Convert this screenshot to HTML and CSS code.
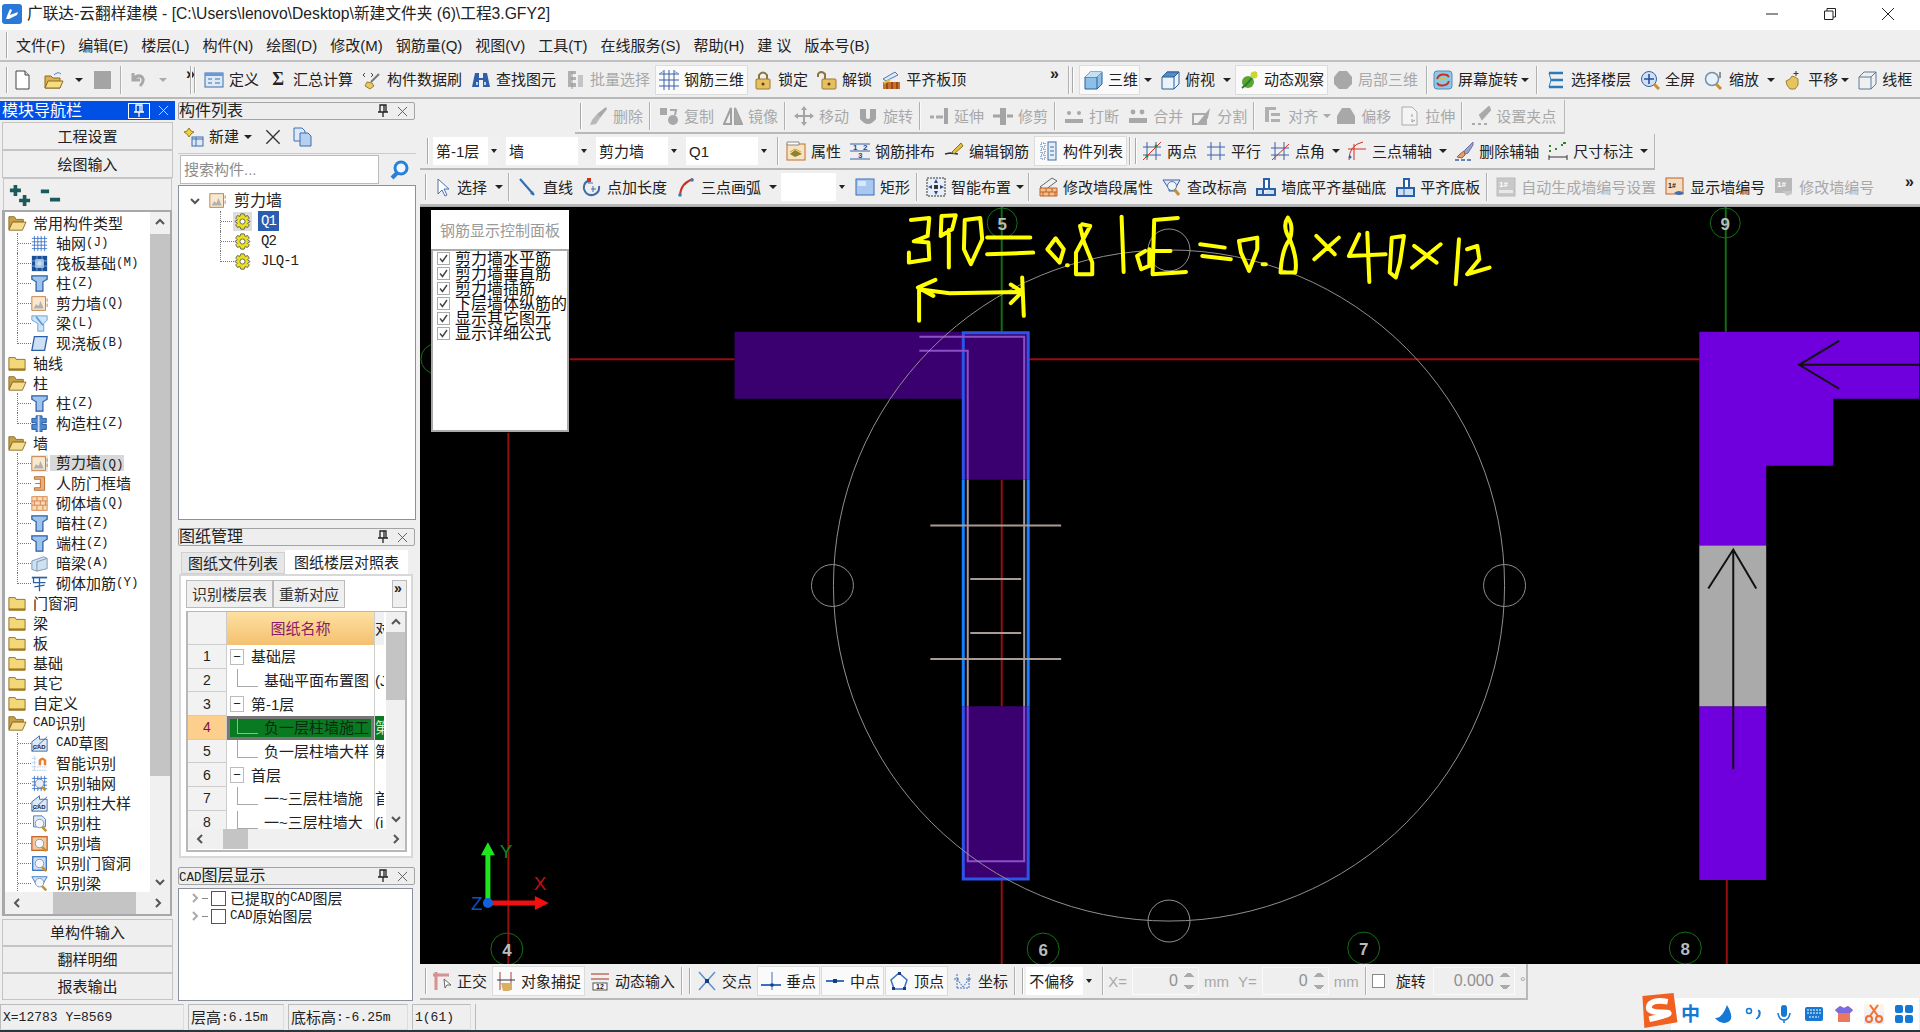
FILE: index.html
```html
<!doctype html>
<html lang="zh-CN">
<head>
<meta charset="utf-8">
<title>广联达-云翻样建模</title>
<link rel="stylesheet" href="styles.css">
</head>
<body>
<svg class="sprite" xmlns="http://www.w3.org/2000/svg">
  <symbol id="new" viewBox="0 0 20 20"><path d="M4 1h9l4 4v14H4z" fill="#fff" stroke="#444"/><path d="M13 1v4h4" fill="#ddd" stroke="#444"/></symbol>
  <symbol id="open" viewBox="0 0 20 20"><path d="M1 6h6l2 2h7v10H1z" fill="#e0b050" stroke="#8a6a20"/><path d="M1 18l3-7h15l-3 7z" fill="#f8dc80" stroke="#8a6a20"/><path d="M10 5q4-4 7-1" stroke="#4a80d0" fill="none"/></symbol>
  <symbol id="save" viewBox="0 0 20 20"><rect x="2" y="1" width="17" height="18" fill="#a4a4a4"/></symbol>
  <symbol id="undo" viewBox="0 0 20 20"><path d="M5 3v7h7M5 9q5-5 9-2 3 4-2 9" stroke="#a8a8a8" stroke-width="3" fill="none"/></symbol>
  <symbol id="def" viewBox="0 0 20 20"><rect x="1" y="3" width="18" height="14" fill="#dfe9f6" stroke="#3a6eb0"/><path d="M1 3h18v3H1z" fill="#6a9ad6"/><path d="M4 9h4M4 13h4M11 9h5M11 13h5" stroke="#3a6eb0"/></symbol>
  <symbol id="brush" viewBox="0 0 20 20"><path d="M3 3L1 5l2 2M9 3l2 2-2 2" stroke="#444" fill="none"/><path d="M17 4L9 12" stroke="#777" stroke-width="2"/><path d="M5 12l5 1 2 3-4 3-5-3z" fill="#e6c860" stroke="#9a8030"/></symbol>
  <symbol id="binoc" viewBox="0 0 20 20"><path d="M4 3h4v5h4V3h4l3 14h-7V10H8v7H1z" fill="#2f5fa8"/><path d="M5 12h2v3H5zM13 12h2v3h-2z" fill="#bcd4f0"/></symbol>
  <symbol id="batch" viewBox="0 0 20 20"><path d="M3 1h8v3H6v3h5v3H6v3h5v4H3z" fill="#b0b0b0"/><path d="M13 5h5v12h-5z" fill="#c4c4c4"/><path d="M7 1v18" stroke="#999"/></symbol>
  <symbol id="rebar" viewBox="0 0 20 20"><path d="M5 0v20M10 0v20M15 0v20M0 4h20M0 10h20M0 16h20" stroke="#3a5fa8" fill="none"/><path d="M0 4l5-3M15 1l5 3" stroke="#7a9ad0"/></symbol>
  <symbol id="lock" viewBox="0 0 20 20"><path d="M6 9V5q4-5 8 0v4" stroke="#8a7440" stroke-width="2" fill="none"/><rect x="3" y="9" width="14" height="10" rx="1" fill="#e6c060" stroke="#9a7a30"/><circle cx="10" cy="14" r="1.5" fill="#5a4010"/></symbol>
  <symbol id="unlock" viewBox="0 0 20 20"><path d="M1 7V4q3-4 7 0v5" stroke="#8a7440" stroke-width="2" fill="none"/><rect x="5" y="9" width="14" height="10" rx="1" fill="#e6c060" stroke="#9a7a30"/><circle cx="12" cy="14" r="1.5" fill="#5a4010"/></symbol>
  <symbol id="flush" viewBox="0 0 20 20"><path d="M2 9l12-7 3 3-12 6z" fill="#dfe9f6" stroke="#4a7ab8"/><rect x="2" y="12" width="17" height="7" fill="#c87030"/><path d="M6 12v7M11 12v7M16 12v7" stroke="#702000"/><path d="M3 13l6-3" stroke="#e0c040" stroke-width="2"/></symbol>
  <symbol id="cube" viewBox="0 0 20 20"><path d="M2 7l5-5h12v12l-5 5H2z" fill="#8cc0e8" stroke="#2f5f98"/><path d="M2 7h12v12M14 7l5-5" fill="none" stroke="#2f5f98"/><path d="M2 7l5-5h12l-5 5z" fill="#c4e0f4"/></symbol>
  <symbol id="cubetop" viewBox="0 0 20 20"><path d="M2 7l5-5h12v12l-5 5H2z" fill="#eaf2fa" stroke="#2f5f98"/><path d="M2 7l5-5h12l-5 5z" fill="#4f8cc8" stroke="#2f5f98"/><path d="M14 7v12" stroke="#2f5f98"/></symbol>
  <symbol id="orbit" viewBox="0 0 20 20"><circle cx="9" cy="12" r="6" fill="#58a830"/><path d="M3 18Q10 13 17 2" stroke="#2a7a3a" stroke-width="2" fill="none"/><circle cx="15" cy="5" r="3.5" fill="#c8d830"/></symbol>
  <symbol id="blob" viewBox="0 0 20 20"><path d="M6 1h8l5 6v7l-5 5H6l-5-5V7z" fill="#a8a8a8"/></symbol>
  <symbol id="screenrot" viewBox="0 0 20 20"><rect x="1" y="1" width="18" height="18" rx="3" fill="#8cc8e8" stroke="#5a8ab0"/><path d="M4 9q2-6 10-4l2 2M16 11q-2 6-10 4l-2-2" stroke="#d03020" stroke-width="2" fill="none"/><path d="M7 10q3-3 6 0" stroke="#d8c040" stroke-width="2" fill="none"/></symbol>
  <symbol id="floor" viewBox="0 0 20 20"><path d="M3 3h14M5 10h12M3 17h14" stroke="#2a7ab8" stroke-width="2.4" fill="none"/><path d="M3 3l2 7-2 7" stroke="#2a7ab8" fill="none"/></symbol>
  <symbol id="zoomall" viewBox="0 0 20 20"><circle cx="9" cy="9" r="7.5" fill="#cfe0f4" stroke="#3a5fa8"/><path d="M9 4v10M4 9h10" stroke="#2a4f98" stroke-width="1.6"/><path d="M14 14l5 5" stroke="#c89030" stroke-width="3"/></symbol>
  <symbol id="zoom" viewBox="0 0 20 20"><circle cx="8" cy="9" r="6.5" fill="#e8f0f8" stroke="#7090b0" stroke-width="1.5"/><path d="M12 14l5 5" stroke="#c89030" stroke-width="3"/><path d="M16 2v6" stroke="#333"/></symbol>
  <symbol id="hand" viewBox="0 0 20 20"><path d="M3 11l4-2 2-3 3 1 3 2v6l-3 4H7l-3-4z" fill="#e6c460" stroke="#a08030"/><path d="M13 1v5M10.500 3.500h5" stroke="#333"/></symbol>
  <symbol id="wire" viewBox="0 0 20 20"><path d="M2 7l5-5h12v12l-5 5H2zM2 7h12v12M14 7l5-5" fill="none" stroke="#5a7a9a"/></symbol>
  <symbol id="g-erase" viewBox="0 0 20 20"><path d="M18 1L9 8l3 4 7-9z" fill="#a8a8a8"/><path d="M9 8l-5 6-2 5 6-1 4-6z" fill="#b8b8b8"/></symbol>
  <symbol id="g-copy" viewBox="0 0 20 20"><rect x="1" y="2" width="7" height="7" fill="#a8a8a8"/><circle cx="14" cy="14" r="5" fill="#a8a8a8"/><path d="M11 4l6 0-1 5" stroke="#a8a8a8" fill="none" stroke-width="2"/></symbol>
  <symbol id="g-mirror" viewBox="0 0 20 20"><path d="M8 2v16H1zM12 2v16h7z" fill="none" stroke="#a0a0a0" stroke-width="2"/><path d="M12 2v16h7z" fill="#a8a8a8"/></symbol>
  <symbol id="g-move" viewBox="0 0 20 20"><path d="M10 0l3 4h-2v5h5V7l4 3-4 3v-2h-5v5h2l-3 4-3-4h2v-5H4v2l-4-3 4-3v2h5V4H7z" fill="#a4a4a4"/></symbol>
  <symbol id="g-rot" viewBox="0 0 20 20"><path d="M2 3h6v9q2 2 4 0V3h6v10q-8 10-16 0z" fill="#a4a4a4"/></symbol>
  <symbol id="g-extend" viewBox="0 0 20 20"><path d="M1 11h4M7 11h7" stroke="#aaa" stroke-width="3"/><rect x="15" y="2" width="4" height="16" fill="#a4a4a4"/></symbol>
  <symbol id="g-trim" viewBox="0 0 20 20"><rect x="7" y="2" width="6" height="17" fill="#a4a4a4"/><path d="M0 10h7M14 10h6" stroke="#a4a4a4" stroke-width="3"/></symbol>
  <symbol id="g-break" viewBox="0 0 20 20"><path d="M1 13h18v4H1z" fill="#a8a8a8"/><circle cx="5" cy="7" r="2" fill="#a8a8a8"/><circle cx="15" cy="7" r="2" fill="#a8a8a8"/><path d="M10 9v4" stroke="#efefef" stroke-width="2"/></symbol>
  <symbol id="g-merge" viewBox="0 0 20 20"><path d="M1 12h18v5H1z" fill="#a8a8a8"/><circle cx="5" cy="6" r="2.400" fill="#a8a8a8"/><circle cx="14" cy="6" r="2.400" fill="#a8a8a8"/></symbol>
  <symbol id="g-split" viewBox="0 0 20 20"><path d="M1 8h13v10H1z" fill="none" stroke="#aaa" stroke-width="2"/><path d="M5 18l13-16-2 10-4 6z" fill="#a8a8a8"/></symbol>
  <symbol id="g-align" viewBox="0 0 20 20"><path d="M2 1h11v3H6v12h-4zM8 7h9v3H8zM8 13h9v3H8z" fill="#b0b0b0"/></symbol>
  <symbol id="g-offset" viewBox="0 0 20 20"><path d="M6 2h8l5 8v8H1v-8z" fill="#a8a8a8"/></symbol>
  <symbol id="g-stretch" viewBox="0 0 20 20"><path d="M2 1h10l5 5v13H2z" fill="#f4f4f4" stroke="#aaa"/><path d="M12 8v3M12 13v3M15 14l-3 2" stroke="#999"/></symbol>
  <symbol id="g-grip" viewBox="0 0 20 20"><path d="M18 1l-9 8 2 4 8-9zM1 18h3M7 18h3M13 18h3" stroke="#aaa" stroke-width="2" fill="#a8a8a8"/></symbol>
  <symbol id="attr" viewBox="0 0 20 20"><rect x="1" y="3" width="18" height="16" fill="#f8e4c0" stroke="#c07030"/><path d="M1 1h12v3H1z" fill="#fff" stroke="#888"/><path d="M4 13l5-4 7 4-7 3z" fill="#908030"/><path d="M4 11l5-3 6 3" stroke="#d0a030" fill="none"/></symbol>
  <symbol id="rebarlay" viewBox="0 0 20 20"><path d="M0 3h20M0 10h20M0 18h20" stroke="#3a5fa8" fill="none"/><text x="3" y="9" class="ictxt">1</text><text x="13" y="9" class="ictxt">2</text><text x="8" y="17" class="ictxt">3</text></symbol>
  <symbol id="editrebar" viewBox="0 0 20 20"><path d="M1 13l5-1 8 1" stroke="#333" stroke-width="1.6" fill="none"/><path d="M8 11l9-9 2 3-9 8z" fill="#e0c040" stroke="#907020"/></symbol>
  <symbol id="list" viewBox="0 0 20 20"><path d="M3 2h4v4H3zM3 8h4v4H3zM3 14h4v4H3z" fill="none" stroke="#3a6ea8" stroke-dasharray="1 1"/><rect x="10" y="1" width="8" height="18" fill="#e4edf8" stroke="#3a6ea8"/><path d="M12 6h4M12 10h4M12 14h4" stroke="#3a6ea8"/></symbol>
  <symbol id="twopt" viewBox="0 0 20 20"><path d="M5 1v18M14 1v18M1 6h18M1 14h18" stroke="#3a5fa8" fill="none"/><path d="M1 19L19 1" stroke="#d03020"/><circle cx="5" cy="15" r="1.500" fill="#2a8a2a"/><circle cx="14" cy="5" r="1.500" fill="#2a8a2a"/></symbol>
  <symbol id="parallel" viewBox="0 0 20 20"><path d="M5 1v18M14 1v18M1 6h18M1 14h18" stroke="#3a5fa8" fill="none"/></symbol>
  <symbol id="angle" viewBox="0 0 20 20"><path d="M5 1v18M14 1v18M1 7h18M1 14h18" stroke="#3a5fa8" fill="none"/><path d="M2 19L19 3" stroke="#d03020"/></symbol>
  <symbol id="threept" viewBox="0 0 20 20"><path d="M1 8h18M7 3v16" stroke="#d03020" fill="none"/><path d="M2 19Q2 4 16 1" stroke="#d03020" fill="none"/><circle cx="3" cy="16" r="1.500" fill="#3a5fa8"/></symbol>
  <symbol id="delaxis" viewBox="0 0 20 20"><path d="M19 1l-8 8-2 5 5-2 5-8z" fill="#9aa4d0" stroke="#6a70a0"/><path d="M10 10l-4 3-3 3 5 1 3-3z" fill="#e0a070" stroke="#a06030"/><path d="M1 19h18" stroke="#3a5fa8" stroke-width="1.500" stroke-dasharray="4 2"/></symbol>
  <symbol id="dim" viewBox="0 0 20 20"><path d="M1 14v5M19 14v5M1 16h18" stroke="#333" fill="none"/><path d="M1 5h2M1 10h2M7 8h2M13 4h2" stroke="#2a8a2a" stroke-width="2"/><path d="M15 2h3" stroke="#2a8a2a" stroke-width="2"/></symbol>
  <symbol id="cursor" viewBox="0 0 20 20"><path d="M6 2v15l4-4 3 6 2-1-3-6h5z" fill="#fff" stroke="#4a70b0"/></symbol>
  <symbol id="line" viewBox="0 0 20 20"><path d="M2 2l14 16" stroke="#2a6fb8" stroke-width="2"/><path d="M16 18l-4-1 3-3z" fill="#2a6fb8"/></symbol>
  <symbol id="ptlen" viewBox="0 0 20 20"><path d="M8 3Q1 5 2 12q2 7 9 6 7-2 6-9" stroke="#3a6fa8" stroke-width="2" fill="none"/><path d="M6 1v5h5M9 12h5M11 9v6" stroke="#3a6fa8" fill="none"/><rect x="5" y="1" width="4" height="4" fill="#d03020"/></symbol>
  <symbol id="arc" viewBox="0 0 20 20"><path d="M4 18Q5 6 17 2" stroke="#d03020" stroke-width="2" fill="none"/><circle cx="4" cy="18" r="1.800" fill="#3a7ab8"/><circle cx="16" cy="3" r="1.800" fill="#3a7ab8"/></symbol>
  <symbol id="rect" viewBox="0 0 20 20"><rect x="1" y="2" width="18" height="16" fill="#a8c8f0" stroke="#3a6fb8"/><rect x="3" y="4" width="8" height="5" fill="#d8e8fa"/></symbol>
  <symbol id="smart" viewBox="0 0 20 20"><rect x="1" y="1" width="18" height="18" fill="#e8eef8" stroke="#333" stroke-dasharray="2 1"/><path d="M10 2l2 4h-4zM10 18l-2-4h4zM2 10l4-2v4zM18 10l-4 2V8z" fill="#2a4a80"/><rect x="8" y="8" width="4" height="4" fill="#333"/></symbol>
  <symbol id="modwall" viewBox="0 0 20 20"><path d="M2 10L14 1l5 3-12 9z" fill="#f0f0f0" stroke="#666"/><path d="M2 11h17v8H2z" fill="#f0c090" stroke="#c06020"/><path d="M2 15h17M8 11v4M14 11v4M5 15v4M11 15v4M17 15v4" stroke="#c06020"/></symbol>
  <symbol id="elev" viewBox="0 0 20 20"><path d="M1 3h17l-5 9v2H7v-2z" fill="#dfe8f4" stroke="#3a5fa8"/><circle cx="10" cy="9" r="4.500" fill="#eef4fa" stroke="#5a7a9a"/><path d="M13 13l4 5" stroke="#c89030" stroke-width="3"/></symbol>
  <symbol id="wallbase" viewBox="0 0 20 20"><path d="M8 2h5v10H8z" fill="#fff" stroke="#2a5fa8" stroke-width="2"/><path d="M1 12h6v6H1zM7 18h12v-6h-6" fill="#cfe0f4" stroke="#2a5fa8" stroke-width="2"/></symbol>
  <symbol id="flushb" viewBox="0 0 20 20"><path d="M9 2h5v9H9z" fill="#fff" stroke="#2a5fa8" stroke-width="2"/><path d="M2 11h17v8H2z" fill="#cfe0f4" stroke="#2a5fa8" stroke-width="2"/><path d="M9 11v8" stroke="#2a5fa8"/></symbol>
  <symbol id="g-auto" viewBox="0 0 20 20"><rect x="1" y="1" width="18" height="18" fill="#c8c8c8" stroke="#bbb"/><text x="3" y="10" class="ictxt w">1#</text><path d="M3 13h14v3H3z" fill="#e8e8e8"/></symbol>
  <symbol id="show" viewBox="0 0 20 20"><rect x="1" y="1" width="17" height="16" fill="#f4dcc0" stroke="#c06020"/><text x="3" y="11" class="ictxt k">1#</text><path d="M9 16q5-4 10 0-5 4-10 0z" fill="#3a6fb8"/></symbol>
  <symbol id="g-mod" viewBox="0 0 20 20"><rect x="1" y="1" width="17" height="15" fill="#b8b8b8"/><text x="3" y="10" class="ictxt w">1#</text><path d="M8 14h10v3l-5 2z" fill="#c8c8c8"/></symbol>
  <symbol id="ortho" viewBox="0 0 20 20"><path d="M4 1v18M1 4h16" stroke="#d89090" stroke-width="3" fill="none"/><path d="M12 8l1 9 2-3 4 0z" fill="#fff" stroke="#666"/></symbol>
  <symbol id="snap" viewBox="0 0 20 20"><path d="M4 1v18M15 1v18" stroke="#a04040" fill="none"/><path d="M1 9h18" stroke="#333"/><path d="M5 12h11v6l-3 2H7z" fill="#d8b060"/></symbol>
  <symbol id="dyn" viewBox="0 0 20 20"><path d="M1 3h18M1 8h18" stroke="#c07060" stroke-width="1.500"/><rect x="3" y="12" width="14" height="7" fill="#fff" stroke="#555"/><text x="6" y="18" class="ictxt k">12</text></symbol>
  <symbol id="cross" viewBox="0 0 20 20"><path d="M2 1l16 18M18 1L2 19" stroke="#5a90d0" stroke-width="1.500"/><rect x="8" y="8" width="4" height="4" fill="#1a3a80"/></symbol>
  <symbol id="perp" viewBox="0 0 20 20"><path d="M0 14h20" stroke="#3a70c0" stroke-width="2"/><path d="M11 1v18" stroke="#3a70c0"/><rect x="9.500" y="12.500" width="3" height="3" fill="#1a3a80"/></symbol>
  <symbol id="mid" viewBox="0 0 20 20"><path d="M1 10h18" stroke="#3a70c0" stroke-width="2"/><rect x="8" y="8" width="4" height="4" fill="#1a3a80"/></symbol>
  <symbol id="vertex" viewBox="0 0 20 20"><path d="M10 2l8 7-3 9H5L2 9z" fill="#fff" stroke="#3a70c0" stroke-width="1.500"/><rect x="9" y="1" width="3" height="3" fill="#1a3a80"/><rect x="3" y="16" width="3" height="3" fill="#1a3a80"/><rect x="14" y="16" width="3" height="3" fill="#1a3a80"/></symbol>
  <symbol id="coord" viewBox="0 0 20 20"><path d="M4 3v14M16 3v14M1 8h6M13 8h6M4 17h12M4 8l6 8 6-8" stroke="#3a70c0" fill="none" stroke-dasharray="2 1"/></symbol>
  <symbol id="fo" viewBox="0 0 20 20"><path d="M1 3h6l2 3h8v3H5L1 17z" fill="#c8a048" stroke="#8a6a20"/><path d="M1 18l4-9h15l-4 9z" fill="#f6dc90" stroke="#8a6a20"/></symbol>
  <symbol id="fc" viewBox="0 0 20 20"><path d="M1 4h7l1 2h10v12H1z" fill="#f4d878" stroke="#8a6a20"/><path d="M1 16h18v2H1z" fill="#a07820"/></symbol>
  <symbol id="grid" viewBox="0 0 20 20"><path d="M1 4h18M1 8h18M1 12h18M1 16h18M4 1v18M8 1v18M12 1v18M16 1v18" stroke="#3a70c0" fill="none"/></symbol>
  <symbol id="raft" viewBox="0 0 20 20"><rect x="1" y="1" width="18" height="18" fill="#1a4f98"/><rect x="5" y="5" width="10" height="10" fill="#cfe0f4"/><path d="M1 7h18M1 13h18M7 1v18M13 1v18" stroke="#8ab0e0"/></symbol>
  <symbol id="col" viewBox="0 0 20 20"><path d="M1 1h18v4l-5 3v11H6V8L1 5z" fill="#9fc4ec" stroke="#2a5fa8" stroke-width="1.500"/></symbol>
  <symbol id="wall" viewBox="0 0 20 20"><rect x="1" y="2" width="16" height="16" fill="#f8e8d0" stroke="#c07030"/><path d="M3 16l3-5 3 2 2-6 4 9z" fill="#b0b0b0"/><path d="M19 4v4M19 10v4" stroke="#c07030"/></symbol>
  <symbol id="beam" viewBox="0 0 20 20"><path d="M1 1h18v5l-4 4v9H8v-9L1 6z" fill="#cfe4f6" stroke="#5a9ad0"/><path d="M6 2l8 10" stroke="#5a9ad0" stroke-width="2"/></symbol>
  <symbol id="slab" viewBox="0 0 20 20"><path d="M4 2h15l-3 16H1z" fill="#cfe0f4" stroke="#2a5fa8" stroke-width="1.500"/></symbol>
  <symbol id="scol" viewBox="0 0 20 20"><path d="M6 1h7v3h5v5h-5v2h5v6h-5v3H6v-3H1v-6h5V9H1V4h5z" fill="#4f88d0" stroke="#1a4f98"/><path d="M9 1v19" stroke="#cfe0f4" stroke-width="2"/></symbol>
  <symbol id="dframe" viewBox="0 0 20 20"><path d="M4 2h12v16H4v-3h7V5H4z" fill="#e8b080" stroke="#b06020"/><path d="M5 10h6" stroke="#b06020"/></symbol>
  <symbol id="brick" viewBox="0 0 20 20"><rect x="1" y="2" width="18" height="16" fill="#f8d8b8" stroke="#d08040"/><path d="M1 7h18M1 12h18M7 2v5M14 2v5M4 7v5M11 7v5M17 7v5M7 12v6M14 12v6" stroke="#d08040"/></symbol>
  <symbol id="dbeam" viewBox="0 0 20 20"><path d="M1 7l14-5 4 2v12l-12 3-6-2z" fill="#cfe0f0" stroke="#7090b0"/><path d="M7 8v11M7 8l12-4" stroke="#7090b0" fill="none"/></symbol>
  <symbol id="reinf" viewBox="0 0 20 20"><path d="M1 3h18" stroke="#2a5fa8" stroke-width="2"/><path d="M3 3v6h14M10 3v16M4 14l12-2" stroke="#2a5fa8" fill="none" stroke-width="1.500"/></symbol>
  <symbol id="cad" viewBox="0 0 20 20"><path d="M1 8l9-7v4h9v14H1z" fill="#dfe8f4" stroke="#2a5fa8"/><path d="M1 19L19 2" stroke="#2a5fa8"/><text x="2" y="16" class="ictxt k">CAD</text></symbol>
  <symbol id="ismart" viewBox="0 0 20 20"><path d="M1 4h6M1 9h6M1 14h18M1 18h18M4 1v18" stroke="#8ab0e0" stroke-dasharray="1 1" fill="none"/><path d="M9 12V6q4-6 9 0v6h-3V7q-1-2-3 0v5z" fill="#e88030"/></symbol>
  <symbol id="igrid" viewBox="0 0 20 20"><path d="M1 4h18M1 8h18M1 12h18M1 16h18M4 1v18M8 1v18M12 1v18M16 1v18" stroke="#3a70c0" fill="none"/><circle cx="10" cy="10" r="5" fill="#e8eef8" stroke="#888"/><path d="M13 14l4 4" stroke="#c89030" stroke-width="3"/></symbol>
  <symbol id="icol" viewBox="0 0 20 20"><path d="M3 1h10l4 4v9H3z" fill="#dfe8f4" stroke="#3a70c0"/><circle cx="10" cy="10" r="5" fill="#f4f8fc" stroke="#7090b0"/><path d="M13 14l5 5" stroke="#c89030" stroke-width="3"/></symbol>
  <symbol id="iwall" viewBox="0 0 20 20"><rect x="1" y="2" width="18" height="16" fill="#f4c8a0" stroke="#c86020" stroke-width="1.500"/><circle cx="10" cy="10" r="5" fill="#f4f8fc" stroke="#7090b0"/><path d="M13 14l5 5" stroke="#c89030" stroke-width="3"/></symbol>
  <symbol id="idoor" viewBox="0 0 20 20"><rect x="2" y="2" width="16" height="16" fill="#cfe0f4" stroke="#3a70c0" stroke-width="1.500"/><circle cx="10" cy="10" r="5" fill="#f4f8fc" stroke="#7090b0"/><path d="M13 14l5 5" stroke="#c89030" stroke-width="3"/></symbol>
  <symbol id="ibeam" viewBox="0 0 20 20"><path d="M1 2h18l-5 9H6z" fill="#cfe0f4" stroke="#3a70c0"/><circle cx="10" cy="9" r="5" fill="#f4f8fc" stroke="#7090b0"/><path d="M13 13l5 5" stroke="#c89030" stroke-width="3"/></symbol>
  <symbol id="gear" viewBox="0 0 20 20"><path d="M8 1h4l1 3 3-1 2 3-2 2 3 2-3 2 2 2-2 3-3-1-1 3H8l-1-3-3 1-2-3 2-2-3-2 3-2-2-2 2-3 3 1z" fill="#e8e020" stroke="#555"/><circle cx="10" cy="10" r="3" fill="#fff" stroke="#555"/></symbol>
  <symbol id="search" viewBox="0 0 20 20"><circle cx="11" cy="8" r="6" fill="#f0f8ff" stroke="#2a80d8" stroke-width="3"/><path d="M7 13l-5 5" stroke="#2a80d8" stroke-width="4"/></symbol>
  <symbol id="newitem" viewBox="0 0 20 20"><path d="M5 1l2 3 3 1-3 2-2 3-2-3-3-2 3-1z" fill="#f0d040" stroke="#908020"/><rect x="8" y="10" width="11" height="9" fill="#dfe8f4" stroke="#3a6eb0"/><path d="M8 12h11M12 10v9" stroke="#3a6eb0"/></symbol>
  <symbol id="copy2" viewBox="0 0 20 20"><path d="M2 1h8l3 3v10H2z" fill="#dfe8f8" stroke="#3a6eb0"/><path d="M8 6h8l3 3v10H8z" fill="#b8d0f0" stroke="#3a6eb0"/></symbol>
  <symbol id="addall" viewBox="0 0 24 24"><path d="M5 1h4v4h4v4H9v4H5V9H1V5h4zM15 12h4v4h4v4h-4v4h-4v-4h-4v-4h4z" fill="#1a5a5a"/></symbol>
  <symbol id="suball" viewBox="0 0 24 24"><path d="M2 6h9v4H2zM12 15h11v4H12z" fill="#1a5a5a"/></symbol>
  <symbol id="check" viewBox="0 0 13 13"><rect x=".5" y=".5" width="12" height="12" fill="#fff" stroke="#aaa"/><path d="M3 6.500l2.500 3L10 3" stroke="#444" stroke-width="1.400" fill="none"/></symbol>
  <symbol id="up" viewBox="0 0 12 8"><path d="M2 6l4-4 4 4" stroke="#555" stroke-width="2" fill="none"/></symbol>
  <symbol id="down" viewBox="0 0 12 8"><path d="M2 2l4 4 4-4" stroke="#555" stroke-width="2" fill="none"/></symbol>
  <symbol id="left" viewBox="0 0 8 12"><path d="M6 2L2 6l4 4" stroke="#555" stroke-width="2" fill="none"/></symbol>
  <symbol id="right" viewBox="0 0 8 12"><path d="M2 2l4 4-4 4" stroke="#555" stroke-width="2" fill="none"/></symbol>
  <symbol id="pin" viewBox="0 0 12 14"><path d="M3 1h6v7H3zM1 8h10M6 8v5M7 1v7" stroke="currentColor" stroke-width="1.300" fill="none"/></symbol>
  <symbol id="x" viewBox="0 0 12 12"><path d="M1 1l10 10M11 1L1 11" stroke="currentColor" fill="none"/></symbol>
</svg>

<header class="titlebar">
  <svg class="appicon" viewBox="0 0 20 20"><rect width="20" height="20" rx="3" fill="#2a78d8"/><path d="M4 15q2-6 4-10l2 1-2 5 8-3-1 3-8 4z" fill="#fff"/></svg>
  <span class="title">广联达-云翻样建模 - [C:\Users\lenovo\Desktop\新建文件夹 (6)\工程3.GFY2]</span>
  <div class="winbtns">
    <svg viewBox="0 0 12 12"><path d="M0 6h12" stroke="#222"/></svg>
    <svg viewBox="0 0 12 12"><path d="M.5 3h8.500v8.500H.5zM3 3V.5h8.500V9H9" fill="none" stroke="#222"/></svg>
    <svg viewBox="0 0 12 12"><path d="M0 0l12 12M12 0L0 12" stroke="#222"/></svg>
  </div>
</header>

<nav class="menubar">
  <i class="grip"></i>
  <span>文件(F)</span><span>编辑(E)</span><span>楼层(L)</span><span>构件(N)</span><span>绘图(D)</span><span>修改(M)</span><span>钢筋量(Q)</span><span>视图(V)</span><span>工具(T)</span><span>在线服务(S)</span><span>帮助(H)</span><span>建 议</span><span>版本号(B)</span>
</nav>

<div class="toolbar row-a">
  <div class="grp first">
    <i class="grip"></i>
    <svg class="ic"><use href="#new"/></svg>
    <svg class="ic open"><use href="#open"/></svg><i class="caret"></i>
    <svg class="ic"><use href="#save"/></svg>
    <i class="sep"></i>
    <svg class="ic"><use href="#undo"/></svg><i class="caret off"></i>
    <b class="more">»</b>
  </div>
  <i class="sep"></i><i class="grip"></i>
  <div class="grp second">
    <span class="tb"><svg class="ic"><use href="#def"/></svg>定义</span>
    <span class="tb"><b class="sigma">Σ</b>汇总计算</span>
    <span class="tb"><svg class="ic"><use href="#brush"/></svg>构件数据刷</span>
    <span class="tb"><svg class="ic"><use href="#binoc"/></svg>查找图元</span>
    <span class="tb off"><svg class="ic"><use href="#batch"/></svg>批量选择</span>
    <span class="tb on"><svg class="ic"><use href="#rebar"/></svg>钢筋三维</span>
    <span class="tb"><svg class="ic"><use href="#lock"/></svg>锁定</span>
    <span class="tb"><svg class="ic"><use href="#unlock"/></svg>解锁</span>
    <span class="tb"><svg class="ic"><use href="#flush"/></svg>平齐板顶</span>
    <b class="more push">»</b>
  </div>
  <i class="sep"></i><i class="grip"></i>
  <div class="grp third">
    <span class="tb on tight"><svg class="ic"><use href="#cube"/></svg>三维</span><i class="caret"></i>
    <span class="tb"><svg class="ic"><use href="#cubetop"/></svg>俯视</span><i class="caret"></i>
    <span class="tb on"><svg class="ic"><use href="#orbit"/></svg>动态观察</span>
    <span class="tb off"><svg class="ic"><use href="#blob"/></svg>局部三维</span>
    <i class="sep r0"></i>
    <span class="tb"><svg class="ic"><use href="#screenrot"/></svg>屏幕旋转</span><i class="caret snug"></i>
    <i class="sep"></i>
    <span class="tb"><svg class="ic"><use href="#floor"/></svg>选择楼层</span>
    <span class="tb"><svg class="ic"><use href="#zoomall"/></svg>全屏</span>
    <span class="tb"><svg class="ic"><use href="#zoom"/></svg>缩放</span><i class="caret"></i>
    <span class="tb"><svg class="ic"><use href="#hand"/></svg>平移</span><i class="caret snug"></i>
    <span class="tb"><svg class="ic"><use href="#wire"/></svg>线框</span>
  </div>
</div>

<div class="main">
  <aside class="nav-col">
    <div class="nav-head"><span>模块导航栏</span><span class="pinbox"><svg class="pin"><use href="#pin"/></svg></span><svg class="close"><use href="#x"/></svg></div>
    <button class="navbtn first">工程设置</button>
    <button class="navbtn">绘图输入</button>
    <div class="nav-tools"><svg class="addall"><use href="#addall"/></svg><svg class="addall"><use href="#suball"/></svg></div>
    <div class="nav-frame">
      <div class="nav-tree">
        <div class="tree-list">
          <div class="tn"><svg class="fold"><use href="#fo"/></svg>常用构件类型</div>
          <div class="tn c"><i class="dots"></i><svg class="ti"><use href="#grid"/></svg>轴网<span class="lt">(J)</span></div>
          <div class="tn c"><i class="dots"></i><svg class="ti"><use href="#raft"/></svg>筏板基础<span class="lt">(M)</span></div>
          <div class="tn c"><i class="dots"></i><svg class="ti"><use href="#col"/></svg>柱<span class="lt">(Z)</span></div>
          <div class="tn c"><i class="dots"></i><svg class="ti"><use href="#wall"/></svg>剪力墙<span class="lt">(Q)</span></div>
          <div class="tn c"><i class="dots"></i><svg class="ti"><use href="#beam"/></svg>梁<span class="lt">(L)</span></div>
          <div class="tn c"><i class="dots last"></i><svg class="ti"><use href="#slab"/></svg>现浇板<span class="lt">(B)</span></div>
          <div class="tn"><svg class="fold"><use href="#fc"/></svg>轴线</div>
          <div class="tn"><svg class="fold"><use href="#fo"/></svg>柱</div>
          <div class="tn c"><i class="dots"></i><svg class="ti"><use href="#col"/></svg>柱<span class="lt">(Z)</span></div>
          <div class="tn c"><i class="dots last"></i><svg class="ti"><use href="#scol"/></svg>构造柱<span class="lt">(Z)</span></div>
          <div class="tn"><svg class="fold"><use href="#fo"/></svg>墙</div>
          <div class="tn c"><i class="dots"></i><svg class="ti sel"><use href="#wall"/></svg><span class="seltxt">剪力墙<span class="lt">(Q)</span></span></div>
          <div class="tn c"><i class="dots"></i><svg class="ti"><use href="#dframe"/></svg>人防门框墙</div>
          <div class="tn c"><i class="dots"></i><svg class="ti"><use href="#brick"/></svg>砌体墙<span class="lt">(Q)</span></div>
          <div class="tn c"><i class="dots"></i><svg class="ti"><use href="#col"/></svg>暗柱<span class="lt">(Z)</span></div>
          <div class="tn c"><i class="dots"></i><svg class="ti"><use href="#col"/></svg>端柱<span class="lt">(Z)</span></div>
          <div class="tn c"><i class="dots"></i><svg class="ti"><use href="#dbeam"/></svg>暗梁<span class="lt">(A)</span></div>
          <div class="tn c"><i class="dots last"></i><svg class="ti"><use href="#reinf"/></svg>砌体加筋<span class="lt">(Y)</span></div>
          <div class="tn"><svg class="fold"><use href="#fc"/></svg>门窗洞</div>
          <div class="tn"><svg class="fold"><use href="#fc"/></svg>梁</div>
          <div class="tn"><svg class="fold"><use href="#fc"/></svg>板</div>
          <div class="tn"><svg class="fold"><use href="#fc"/></svg>基础</div>
          <div class="tn"><svg class="fold"><use href="#fc"/></svg>其它</div>
          <div class="tn"><svg class="fold"><use href="#fc"/></svg>自定义</div>
          <div class="tn"><svg class="fold"><use href="#fo"/></svg><span class="lt">CAD</span>识别</div>
          <div class="tn c"><i class="dots"></i><svg class="ti"><use href="#cad"/></svg><span class="lt">CAD</span>草图</div>
          <div class="tn c"><i class="dots"></i><svg class="ti"><use href="#ismart"/></svg>智能识别</div>
          <div class="tn c"><i class="dots"></i><svg class="ti"><use href="#igrid"/></svg>识别轴网</div>
          <div class="tn c"><i class="dots"></i><svg class="ti"><use href="#cad"/></svg>识别柱大样</div>
          <div class="tn c"><i class="dots"></i><svg class="ti"><use href="#icol"/></svg>识别柱</div>
          <div class="tn c"><i class="dots"></i><svg class="ti"><use href="#iwall"/></svg>识别墙</div>
          <div class="tn c"><i class="dots"></i><svg class="ti"><use href="#idoor"/></svg>识别门窗洞</div>
          <div class="tn c"><i class="dots"></i><svg class="ti"><use href="#ibeam"/></svg>识别梁</div>
        </div>
        <div class="vbar nav-v">
          <svg class="arr"><use href="#up"/></svg>
          <div class="vtrack"><div class="vthumb"></div></div>
          <svg class="arr"><use href="#down"/></svg>
        </div>
      </div>
      <div class="hbar nav-h">
        <svg class="arrh"><use href="#left"/></svg>
        <div class="htrack"><div class="hthumb"></div></div>
        <svg class="arrh"><use href="#right"/></svg>
      </div>
    </div>
    <div class="nav-bottom">
      <button class="navbtn">单构件输入</button>
      <button class="navbtn">翻样明细</button>
      <button class="navbtn">报表输出</button>
    </div>
  </aside>

  <aside class="mid-col">
    <div class="pane-head"><span>构件列表</span><svg class="pin"><use href="#pin"/></svg><svg class="close"><use href="#x"/></svg></div>
    <div class="list-tools">
      <svg class="ic"><use href="#newitem"/></svg><span>新建</span><i class="caret small"></i>
      <svg class="bigx"><use href="#x"/></svg>
      <svg class="ic"><use href="#copy2"/></svg>
    </div>
    <div class="searchrow"><span class="searchbox">搜索构件...</span><svg class="ic"><use href="#search"/></svg></div>
    <div class="comp-tree">
      <div class="ct-root"><svg class="chev"><use href="#down"/></svg><svg class="ti"><use href="#wall"/></svg><span>剪力墙</span></div>
      <div class="ct-item"><i class="dots"></i><svg class="gear active"><use href="#gear"/></svg><span class="q sel">Q1</span></div>
      <div class="ct-item"><i class="dots"></i><svg class="gear"><use href="#gear"/></svg><span class="q">Q2</span></div>
      <div class="ct-item"><i class="dots last"></i><svg class="gear"><use href="#gear"/></svg><span class="q">JLQ-1</span></div>
    </div>

    <div class="pane-head second"><span>图纸管理</span><svg class="pin"><use href="#pin"/></svg><svg class="close"><use href="#x"/></svg></div>
    <div class="tabs"><span class="tab">图纸文件列表</span><span class="tab active">图纸楼层对照表</span></div>
    <div class="sheet-panel">
      <div class="sheet-tools"><button>识别楼层表</button><button>重新对应</button><b class="more boxed">»</b></div>
      <div class="sheet-table">
        <div class="st-body">
          <div class="st-rows">
            <div class="drow head"><span class="no"></span><span class="name">图纸名称</span><span class="next">对</span></div>
            <div class="drow"><span class="no">1</span><span class="cell"><i class="pm">−</i>基础层</span><span class="next"></span></div>
            <div class="drow"><span class="no">2</span><span class="cell"><i class="elbow"></i>基础平面布置图</span><span class="next">(J</span></div>
            <div class="drow"><span class="no">3</span><span class="cell"><i class="pm">−</i>第-1层</span><span class="next"></span></div>
            <div class="drow picked"><span class="no">4</span><span class="cell"><i class="elbow"></i>负一层柱墙施工</span><span class="next">第</span></div>
            <div class="drow"><span class="no">5</span><span class="cell"><i class="elbow"></i>负一层柱墙大样</span><span class="next">第</span></div>
            <div class="drow"><span class="no">6</span><span class="cell"><i class="pm">−</i>首层</span><span class="next"></span></div>
            <div class="drow"><span class="no">7</span><span class="cell"><i class="elbow"></i>一~三层柱墙施</span><span class="next">首</span></div>
            <div class="drow"><span class="no">8</span><span class="cell"><i class="elbow"></i>一~三层柱墙大</span><span class="next">(i</span></div>
          </div>
          <div class="vbar st-v">
            <svg class="arr"><use href="#up"/></svg>
            <div class="vtrack"><div class="vthumb"></div></div>
            <svg class="arr"><use href="#down"/></svg>
          </div>
        </div>
        <div class="hbar st-h">
          <svg class="arrh"><use href="#left"/></svg>
          <div class="htrack"><div class="hthumb"></div></div>
          <svg class="arrh"><use href="#right"/></svg>
        </div>
      </div>
    </div>

    <div class="pane-head third"><span><span class="lt">CAD</span>图层显示</span><svg class="pin"><use href="#pin"/></svg><svg class="close"><use href="#x"/></svg></div>
    <div class="layer-tree">
      <div class="lr"><svg class="chevr"><use href="#right"/></svg><i class="dash"></i><i class="cb"></i>已提取的<span class="lt">CAD</span>图层</div>
      <div class="lr"><svg class="chevr"><use href="#right"/></svg><i class="dash"></i><i class="cb"></i><span class="lt">CAD</span>原始图层</div>
    </div>
  </aside>

  <section class="work">
    <div class="toolbar row-b off-row">
      <i class="grip"></i>
      <span class="tb"><svg class="ic"><use href="#g-erase"/></svg>删除</span><i class="sep"></i>
      <span class="tb"><svg class="ic"><use href="#g-copy"/></svg>复制</span>
      <span class="tb"><svg class="ic"><use href="#g-mirror"/></svg>镜像</span><i class="sep"></i>
      <span class="tb"><svg class="ic"><use href="#g-move"/></svg>移动</span>
      <span class="tb"><svg class="ic"><use href="#g-rot"/></svg>旋转</span><i class="sep"></i>
      <span class="tb"><svg class="ic"><use href="#g-extend"/></svg>延伸</span>
      <span class="tb"><svg class="ic"><use href="#g-trim"/></svg>修剪</span><i class="sep"></i>
      <span class="tb"><svg class="ic"><use href="#g-break"/></svg>打断</span>
      <span class="tb"><svg class="ic"><use href="#g-merge"/></svg>合并</span>
      <span class="tb"><svg class="ic"><use href="#g-split"/></svg>分割</span><i class="sep"></i>
      <span class="tb"><svg class="ic"><use href="#g-align"/></svg>对齐</span><i class="caret off"></i>
      <span class="tb"><svg class="ic"><use href="#g-offset"/></svg>偏移</span>
      <span class="tb"><svg class="ic"><use href="#g-stretch"/></svg>拉伸</span><i class="sep"></i>
      <span class="tb"><svg class="ic"><use href="#g-grip"/></svg>设置夹点</span>
    </div>
    <div class="toolbar row-c">
      <i class="grip"></i>
      <span class="combo w67">第-1层<i class="arrow"></i></span>
      <span class="combo w84">墙<i class="arrow"></i></span>
      <span class="combo w84">剪力墙<i class="arrow"></i></span>
      <span class="combo w84">Q1<i class="arrow"></i></span>
      <i class="sep"></i>
      <span class="tb"><svg class="ic"><use href="#attr"/></svg>属性</span>
      <span class="tb"><svg class="ic"><use href="#rebarlay"/></svg>钢筋排布</span>
      <span class="tb"><svg class="ic"><use href="#editrebar"/></svg>编辑钢筋</span>
      <span class="tb on"><svg class="ic"><use href="#list"/></svg>构件列表</span>
      <i class="sep"></i><i class="grip"></i>
      <span class="tb"><svg class="ic"><use href="#twopt"/></svg>两点</span>
      <span class="tb"><svg class="ic"><use href="#parallel"/></svg>平行</span>
      <span class="tb"><svg class="ic"><use href="#angle"/></svg>点角</span><i class="caret"></i>
      <span class="tb"><svg class="ic"><use href="#threept"/></svg>三点辅轴</span><i class="caret"></i>
      <span class="tb"><svg class="ic"><use href="#delaxis"/></svg>删除辅轴</span>
      <span class="tb"><svg class="ic"><use href="#dim"/></svg>尺寸标注</span><i class="caret"></i>
    </div>
    <div class="toolbar row-d">
      <i class="grip"></i>
      <span class="tb"><svg class="ic"><use href="#cursor"/></svg>选择</span><i class="caret"></i><i class="sep"></i>
      <span class="tb"><svg class="ic"><use href="#line"/></svg>直线</span>
      <span class="tb"><svg class="ic"><use href="#ptlen"/></svg>点加长度</span>
      <span class="tb"><svg class="ic"><use href="#arc"/></svg>三点画弧</span><i class="caret"></i>
      <span class="combo w67"><i class="arrow"></i></span>
      <span class="tb"><svg class="ic"><use href="#rect"/></svg>矩形</span><i class="sep"></i>
      <span class="tb"><svg class="ic"><use href="#smart"/></svg>智能布置</span><i class="caret small"></i><i class="sep"></i>
      <span class="tb"><svg class="ic"><use href="#modwall"/></svg>修改墙段属性</span>
      <span class="tb"><svg class="ic"><use href="#elev"/></svg>查改标高</span>
      <span class="tb"><svg class="ic"><use href="#wallbase"/></svg>墙底平齐基础底</span>
      <span class="tb"><svg class="ic"><use href="#flushb"/></svg>平齐底板</span><i class="sep"></i>
      <span class="tb off"><svg class="ic"><use href="#g-auto"/></svg>自动生成墙编号设置</span>
      <span class="tb"><svg class="ic"><use href="#show"/></svg>显示墙编号</span>
      <span class="tb off"><svg class="ic"><use href="#g-mod"/></svg>修改墙编号</span>
      <b class="more push">»</b>
    </div>

    <div class="canvas">
      <svg class="drawing" viewBox="420 206 1500 758" xmlns="http://www.w3.org/2000/svg">
        <g class="axis-red">
          <path d="M569 358.500H734M1029 358.500H1700M507.500 432V964M1001.500 479V706M1001.500 880V964M1727.500 880V964"/>
        </g>
        <g class="axis-green">
          <path d="M1001.500 206V331M1726.500 206V331"/>
        </g>

        <g class="wall-dark">
          <path d="M734 331H962V398H734z"/>
          <path d="M962 331H1029V479H962z"/>
          <path d="M962 706H1029V880H962z"/>
        </g>
        <path class="edge-bright" d="M963 479V706M1028 479V706"/>
        <path class="edge-dark" d="M963 479V332H1028V479M963 706V879H1028V706"/>
        <path class="bar-gray" d="M967.500 479V706M1024 479V706M930 525H1061M930 658.500H1061M970 578.500H1021M970 632.500H1021"/>
        <path class="bar-purple" d="M919 336H1024V479M919 350H967.500V479M967.500 706V861H1024V706"/>

        <g class="wall-bright">
          <path d="M1700 331H1920V398H1834V465H1767V545H1700z"/>
          <path d="M1700 706H1767V880H1700z"/>
        </g>
        <path d="M1700 545H1767V706H1700z" fill="#aaa"/>
        <path class="arrow-line" d="M1734 769V549M1709 588L1734 549L1757 588M1920 364H1800M1840 340L1800 364L1840 388"/>

        <g class="cad-circles">
          <circle cx="1169" cy="585" r="336"/>
          <circle cx="832" cy="585" r="21"/>
          <circle cx="1505" cy="585" r="21"/>
          <circle cx="1169" cy="921" r="21"/>
          <circle cx="1169" cy="249" r="21"/>
        </g>

        <g class="axis-tags">
          <circle cx="435" cy="358" r="15"/>
          <circle cx="1002" cy="222" r="15"/>
          <circle cx="1726" cy="222" r="15"/>
          <circle cx="506" cy="949" r="16"/>
          <circle cx="1043" cy="949" r="16"/>
          <circle cx="1364" cy="948" r="16"/>
          <circle cx="1686" cy="948" r="16"/>
        </g>
        <g class="axis-nums">
          <text x="1002" y="229">5</text>
          <text x="1726" y="229">9</text>
          <text x="506" y="956">4</text>
          <text x="1043" y="956">6</text>
          <text x="1364" y="955">7</text>
          <text x="1686" y="955">8</text>
        </g>

        <g transform="translate(880 205) scale(.408 .3333)">
          <path class="ink" d="M75 42L120 36L116 90L82 106L118 110L120 160L70 170L70 140M150 30L185 28L176 70L148 90ZM168 72L168 185M207 42L245 36L250 100L222 175L205 130ZM262 95H368M262 145L375 140M430 97L410 130L440 170L450 130ZM458 178h2M495 55L515 60L480 140L480 205L520 205L520 170L500 110L490 60M592 32L597 198M650 135L630 150L640 190L660 180L660 130M730 36L672 42L668 205L750 198M675 135H712M785 115L845 125M790 150L860 160M880 105L925 95L925 130L905 195L885 140ZM938 175h8M1000 35Q1015 60 1005 100Q1025 160 1018 200L982 200Q985 130 1005 100Q985 60 1000 35M1065 160L1125 95M1070 90L1115 145M1175 85L1150 150L1240 145M1195 80L1200 228M1255 95L1285 90L1275 170L1265 215L1250 200ZM1305 185L1375 115M1310 120L1365 170M1420 100L1412 235M1440 130L1465 120L1470 160L1440 205L1495 185M95 345L95 245M135 222L92 245L130 270M95 250L170 262L340 258M320 292L348 258L320 236M348 215L352 330"/>
        </g>

        <g class="gizmo">
          <path d="M484.500 855V900H489.500V855H494L487 842L480 855z" fill="#1ee61e"/>
          <path d="M487 900.500H534V896L548 903L534 910V905.500H487z" fill="#f01010"/>
          <circle cx="487" cy="903" r="5" fill="#1060e0"/>
          <text x="470" y="910" class="gz z">Z</text>
          <text x="499" y="858" class="gz y">Y</text>
          <text x="533" y="890" class="gz xx">X</text>
        </g>
      </svg>

      <div class="rebar-panel">
        <div class="rp-title">钢筋显示控制面板</div>
        <div class="rp-list">
          <label><svg class="chk"><use href="#check"/></svg>剪力墙水平筋</label>
          <label><svg class="chk"><use href="#check"/></svg>剪力墙垂直筋</label>
          <label><svg class="chk"><use href="#check"/></svg>剪力墙插筋</label>
          <label><svg class="chk"><use href="#check"/></svg>下层墙体纵筋的弯折</label>
          <label><svg class="chk"><use href="#check"/></svg>显示其它图元</label>
          <label><svg class="chk"><use href="#check"/></svg>显示详细公式</label>
        </div>
      </div>
    </div>

    <div class="toolbar row-e">
      <i class="grip"></i>
      <span class="tb"><svg class="ic"><use href="#ortho"/></svg>正交</span>
      <span class="tb on"><svg class="ic"><use href="#snap"/></svg>对象捕捉</span>
      <span class="tb"><svg class="ic"><use href="#dyn"/></svg>动态输入</span>
      <i class="sep"></i><i class="grip"></i>
      <span class="tb"><svg class="ic"><use href="#cross"/></svg>交点</span>
      <span class="tb on"><svg class="ic"><use href="#perp"/></svg>垂点</span>
      <span class="tb on"><svg class="ic"><use href="#mid"/></svg>中点</span>
      <span class="tb on"><svg class="ic"><use href="#vertex"/></svg>顶点</span>
      <span class="tb"><svg class="ic"><use href="#coord"/></svg>坐标</span>
      <i class="sep"></i><i class="grip"></i>
      <span class="combo w69">不偏移<i class="arrow"></i></span>
      <i class="sep"></i>
      <span class="dim-l">X=</span><span class="num w67">0<i class="spin"></i></span><span class="dim-l mm">mm</span>
      <span class="dim-l">Y=</span><span class="num w67">0<i class="spin"></i></span><span class="dim-l mm last">mm</span>
      <i class="sep"></i>
      <i class="cb small"></i><span class="rot">旋转</span>
      <span class="num w82">0.000<i class="spin"></i></span><span class="dim-l deg">°</span>
    </div>
  </section>
</div>

<footer class="status">
  <span class="st w184 lt2">X=12783 Y=8569</span>
  <span class="st w96">层高<span class="lt2">:6.15m</span></span>
  <span class="st w120">底标高<span class="lt2">:-6.25m</span></span>
  <span class="st w59 lt2">1(61)</span>
  <span class="st rest"></span>
</footer>
<div class="strip"></div>

<div class="ime">
  <svg class="sogou" viewBox="0 0 40 36"><path d="M4 3L36 0L40 30L6 36z" fill="#f06020"/><path d="M30 9Q14 6 11 13T25 20T11 27" stroke="#fff" stroke-width="6" fill="none"/></svg>
  <span class="ime-zh">中</span>
  <svg class="im" viewBox="0 0 20 20"><path d="M13 1Q8 15 1 14q6 7 13 4T13 1z" fill="#1478d4"/></svg>
  <svg class="im" viewBox="0 0 20 20"><circle cx="5" cy="7" r="2.500" fill="none" stroke="#1478d4" stroke-width="1.500"/><path d="M14 6q3 4-2 9 5-1 4-8z" fill="#1478d4" stroke="#1478d4"/></svg>
  <svg class="im" viewBox="0 0 20 20"><rect x="7" y="1" width="6" height="12" rx="3" fill="#1478d4"/><path d="M4 9q1 7 6 7t6-7M10 16v3" stroke="#1478d4" stroke-width="1.500" fill="none"/></svg>
  <svg class="im" viewBox="0 0 20 20"><rect x="1" y="3" width="18" height="14" rx="2" fill="#1478d4"/><path d="M3 6h14M3 9h14M5 13h10" stroke="#fff" stroke-dasharray="2 1"/></svg>
  <svg class="im" viewBox="0 0 20 20"><path d="M6 2l4 2 4-2 5 4-3 3v9H4V9L1 6z" fill="#e87860"/><path d="M6 2l4 2 4-2 5 4-3 3H4L1 6z" fill="#7a6ce0"/></svg>
  <svg class="im cut" viewBox="0 0 20 20"><circle cx="5" cy="15" r="3" fill="none" stroke="#f07030" stroke-width="2"/><circle cx="15" cy="15" r="3" fill="none" stroke="#f07030" stroke-width="2"/><path d="M6 12L14 1M14 12L6 1" stroke="#f07030" stroke-width="2"/></svg>
  <svg class="im" viewBox="0 0 20 20"><rect x="1" y="1" width="8" height="8" rx="2" fill="#1478d4"/><rect x="11" y="1" width="8" height="8" rx="2" fill="#1478d4"/><rect x="1" y="11" width="8" height="8" rx="2" fill="#1478d4"/><rect x="11" y="11" width="8" height="8" rx="2" fill="#1478d4"/></svg>
</div>
</body>
</html>
```

FILE: styles.css
```css
html, body {
    margin: 0;
    width: 1920px;
    height: 1032px;
    overflow: hidden;
    background: #efefef;
    color: #222;
    font-size: 15px;
    line-height: 1;
    font-family: "Liberation Sans", "Noto Sans CJK SC", sans-serif;
}

body {
    position: relative;
    display: flex;
    flex-direction: column;
}

.sprite { display: none; }
i { font-style: normal; }

.ictxt { font-size: 8px; font-weight: bold; fill: #2a4a80; font-family: "Liberation Sans", sans-serif; }
.ictxt.w { fill: #fff; }
.ictxt.k { fill: #222; font-size: 7px; }

/* window chrome */
.titlebar {
    height: 30px;
    background: #fff;
    display: flex;
    align-items: center;
    padding: 0 0 2px 2px;
    box-sizing: border-box;
}
.appicon { width: 20px; height: 22px; margin-right: 5px; }
.title { font-size: 15.700px; }
.winbtns { margin-left: auto; display: flex; gap: 46px; padding-right: 26px; }
.winbtns svg { width: 12px; height: 12px; }

.menubar {
    height: 32px;
    box-sizing: border-box;
    display: flex;
    align-items: center;
    gap: 13px;
    padding-left: 6px;
    border-bottom: 2px solid #c0c0c0;
}
.menubar .grip { margin: 0 -5px 0 0; }

/* toolbars */
.toolbar {
    display: flex;
    align-items: center;
    box-sizing: border-box;
    border-bottom: 2px solid #b8b8b8;
    white-space: nowrap;
}
.row-a { height: 37px; padding-left: 6px; }
.row-b { height: 34px; margin: 1px 0 0 155px; width: 990px; border-right: 1px solid #b8b8b8; padding-left: 2px; gap: 1px; }
.row-c { height: 36px; width: 1235px; border-right: 1px solid #b8b8b8; padding-left: 4px; gap: 1px; }
.row-d { height: 36px; padding-left: 4px; gap: 1px; }
.row-e { height: 36px; width: 1108px; padding-left: 4px; border-right: 2px solid #b8b8b8; gap: 1px; }

.grp { display: flex; align-items: center; height: 100%; flex: none; box-sizing: border-box; }
.grp.first { width: 181px; gap: 2px; }
.grp.first .ic { margin: 0 6px 0 4px; }
.grp.first .grip { margin: 0 -2px 0 0; }
.grp.first .sep { margin: 0; }
.grp.first .more { margin-left: 14px; }
.grp.second { width: 868px; gap: 1px; padding-left: 3px; }
.grp.third { flex: 1; gap: 1px; padding-left: 4px; }
.grp.third .sep { margin: 0 3px; }
.grp.third .sep.r0 { margin-right: 0; }
.row-a > .sep { margin: 0 1px 0 3px; }
.row-a > .grip { margin: 0 1px; }

.grip { width: 2px; height: 26px; box-sizing: border-box; border-left: 1px solid #a8a8a8; border-right: 1px solid #fff; margin: 0 3px; flex: none; }
.sep { width: 2px; height: 28px; box-sizing: border-box; border-left: 1px solid #b0b0b0; border-right: 1px solid #fafafa; margin: 0 3px 0 1px; flex: none; }

.row-b .grip { margin: 0 1px 0 3px; }
.row-b .caret { margin: 0; }
.row-c .sep { margin: 0 2px 0 1px; }
.row-c .sep + .grip { margin: 0 0 0 1px; }
.row-c .caret { margin: 0 2px; }
.row-d .grip, .row-e .grip { margin: 0 0 0 1px; }
.row-d .combo { margin-right: 2px; }
.row-e .sep + .grip { margin: 0 1px 0 2px; }

.tb {
    display: inline-flex;
    align-items: center;
    gap: 5px;
    height: 30px;
    padding: 0 4px;
    box-sizing: border-box;
    flex: none;
}
.tb.on { background: #fafafa; border: 1px solid #dcdcdc; padding: 0 3px; }
.tb.tight { padding-right: 1px; }
.tb.off, .off-row .tb { color: #a8a8a8; }

.ic { width: 20px; height: 20px; flex: none; }
.sigma { width: 20px; text-align: center; font: bold 18px "Liberation Serif", serif; }

.caret { width: 0; height: 0; border: 4px solid transparent; border-top: 4px solid #222; border-bottom: 0; margin: 0 3px; flex: none; }
.caret.off { border-top-color: #aaa; }
.caret.small { margin: 0 2px 0 0; }
.caret.snug { margin-left: -2px; }

.more { font-size: 16px; align-self: flex-start; margin: 4px 0 0 4px; font-weight: bold; }
.more.push { margin-left: auto; margin-right: 6px; }

.combo {
    display: inline-flex;
    align-items: center;
    justify-content: space-between;
    height: 28px;
    background: #fff;
    padding-left: 3px;
    box-sizing: border-box;
    margin-right: 5px;
    flex: none;
}
.combo:empty { justify-content: flex-end; }
.w67 { width: 67px; }
.w69 { width: 69px; }
.w84 { width: 84px; }
.w82 { width: 82px; }
.arrow {
    width: 12px;
    height: 100%;
    margin-left: auto;
    background: #f0f0f0;
    display: flex;
    align-items: center;
    justify-content: center;
}
.arrow::after { content: ""; border: 3.500px solid transparent; border-top: 4px solid #222; border-bottom: 0; }

/* main layout */
.main { height: 903px; display: flex; }

.nav-col { width: 175px; flex: none; display: flex; flex-direction: column; }
.nav-head {
    margin-top: 2px;
    height: 19px;
    background: #0050e6;
    color: #fff;
    font-size: 16px;
    display: flex;
    align-items: center;
    padding-left: 2px;
}
.pinbox { margin-left: auto; width: 22px; height: 16px; border: 1px solid #fff; box-sizing: border-box; display: flex; align-items: center; justify-content: center; }
.pin { width: 12px; height: 14px; color: #222; }
.pinbox .pin { color: #fff; }
.close { width: 11px; height: 11px; color: #555; margin: 0 6px 0 8px; }
.nav-head .close { color: #cfe0ff; }

.navbtn {
    display: block;
    width: 171px;
    height: 28px;
    margin: 0 0 0 2px;
    padding: 0;
    background: #efefef;
    border: 1px solid #c4c4c4;
    color: #222;
    font: inherit;
}
.navbtn.first { margin-top: 2px; }

.nav-tools { height: 32px; margin-left: 3px; width: 169px; border: 1px solid #c8c8c8; border-bottom: 0; box-sizing: border-box; display: flex; align-items: center; gap: 8px; padding-left: 5px; }
.addall { width: 22px; height: 22px; }

.nav-frame { flex: none; width: 170px; height: 706px; margin-left: 2px; border: 2px solid #a8a8a8; border-width: 2px 2px 2px 3px; box-sizing: border-box; display: flex; flex-direction: column; }
.nav-tree { display: flex; height: 680px; }
.tree-list { width: 145px; background: #fff; overflow: hidden; padding-top: 1px; }
.tn { height: 20px; display: flex; align-items: center; white-space: nowrap; padding-left: 2px; }
.tn.c { padding-left: 0; }
.fold { width: 20px; height: 18px; margin-right: 6px; flex: none; }
.dots {
    width: 14px;
    height: 20px;
    margin-left: 12px;
    flex: none;
    box-sizing: border-box;
    border-left: 1px dotted #777;
    background: repeating-linear-gradient(90deg, #777 0 1px, transparent 1px 2px) center/100% 1px no-repeat;
}
.dots.last { height: 11px; align-self: flex-start; background-position: bottom; }
.ti { width: 17px; height: 17px; margin-right: 8px; flex: none; }
.ti.sel { background: #e8e8e8; }
.seltxt { background: #d8d8d8; margin-left: -6px; padding-left: 6px; }
.lt { font: 12.500px/1 "Liberation Mono", monospace; }
.lt2 { font-family: "Liberation Mono", monospace; font-size: 13px; }

.vbar { display: flex; flex-direction: column; align-items: center; background: #f0f0f0; }
.vbar .vtrack { flex: 1; width: 100%; }
.nav-v { width: 20px; }
.nav-v .vthumb { margin-top: 2px; height: 542px; background: #c4c4c4; }
.arr { width: 12px; height: 8px; margin: 6px 0; flex: none; }

.hbar { display: flex; align-items: center; background: #f0f0f0; }
.hbar .htrack { flex: 1; height: 100%; }
.nav-h { height: 22px; }
.nav-h .hthumb { margin-left: 24px; width: 83px; height: 100%; background: #c4c4c4; }
.arrh { width: 8px; height: 12px; margin: 0 8px; flex: none; }

.nav-bottom { margin-top: 3px; display: flex; flex-direction: column; gap: 0; }
.nav-bottom .navbtn { height: 27px; }

/* middle column */
.mid-col { width: 238px; margin: 0 4px 0 3px; flex: none; display: flex; flex-direction: column; }
.pane-head {
    height: 18px;
    margin-top: 3px;
    box-sizing: border-box;
    border: 1px solid #a4a4a4;
    border-radius: 2px;
    font-size: 16px;
    display: flex;
    align-items: center;
    background: #eee;
    margin-right: 1px;
}
.pane-head .pin { margin-left: auto; }
.pane-head.second { margin-top: 8px; }
.pane-head.third { margin-top: 9px; }

.list-tools { height: 33px; display: flex; align-items: center; padding-left: 6px; gap: 5px; border-bottom: 1px solid #ccc; }
.bigx { width: 16px; height: 16px; color: #333; margin: 0 6px 0 6px; }
.searchrow { height: 31px; display: flex; align-items: center; gap: 6px; padding: 0 6px 0 2px; }
.searchrow .ic { margin-left: 5px; }
.searchbox { width: 202px; height: 29px; background: #fff; border: 1px solid #bbb; box-sizing: border-box; color: #8c8c8c; display: flex; align-items: center; padding-left: 3px; }

.comp-tree { height: 335px; box-sizing: border-box; background: #fff; border: 1px solid #8a90a0; }
.ct-root { height: 21px; display: flex; align-items: center; padding-left: 10px; font-size: 16px; margin-top: 4px; }
.chev { width: 12px; height: 8px; margin-right: 8px; }
.ct-item { height: 20px; display: flex; align-items: center; padding-left: 41px; }
.ct-item .dots { margin-left: 0; }
.gear { width: 17px; height: 17px; margin-right: 7px; flex: none; }
.gear.active { background: #ddd; box-shadow: 0 0 0 1px #ddd; }
.q { font: 14px "Liberation Mono", monospace; padding: 2px 3px; letter-spacing: -1px; }
.q.sel { background: #2a5cb0; color: #fff; }

.tabs { height: 23px; margin-top: 5px; display: flex; align-items: flex-end; padding-left: 3px; }
.tab { height: 22px; width: 104px; display: flex; align-items: center; justify-content: center; background: #e6e6e6; border: 1px solid #d0d0d0; box-sizing: border-box; }
.tab.active { width: 123px; height: 24px; background: #fff; border: 0; }
.sheet-panel { height: 284px; box-sizing: border-box; background: #fff; border: 2px solid #d8d8d8; padding: 4px 4px 0 5px; margin: 0 0 0 1px; width: 234px; }
.sheet-tools { display: flex; height: 31px; }
.sheet-tools button { height: 28px; background: #efefef; border: 1px solid #bbb; font: inherit; color: #333; padding: 0 5px; }
.more.boxed { margin: 0 0 0 auto; width: 15px; height: 28px; box-sizing: border-box; border: 1px solid #bbb; background: #efefef; font-size: 14px; padding: 0 1px; }

.sheet-table { height: 241px; border: 2px solid #b8b8b8; border-top-width: 1px; box-sizing: border-box; display: flex; flex-direction: column; }
.st-body { display: flex; height: 217px; }
.st-rows { width: 200px; overflow: hidden; }
.drow { display: grid; grid-template-columns: 39px 147px 14px; height: 23.700px; align-items: stretch; white-space: nowrap; }
.drow.head { height: 33px; }
.drow span { overflow: hidden; display: flex; align-items: center; box-sizing: border-box; }
.no { justify-content: center; background: #f2f2f2; border-bottom: 1px solid #ccc; border-right: 1px solid #ccc; font-size: 14px; }
.name { justify-content: center; color: #8a1a6a; background: linear-gradient(#fde0a0, #f4c070); }
.next { border-left: 1px solid #ccc; }
.head .next { background: #f0f0f0; }
.cell { padding-left: 3px; }
.pm { width: 14px; height: 16px; box-sizing: border-box; border: 1px solid #bbb; line-height: 13px; text-align: center; font-size: 13px; margin-right: 7px; flex: none; }
.elbow { width: 21px; height: 23px; box-sizing: border-box; margin: 0 6px 11px 7px; border-left: 1px solid #a8a8a8; border-bottom: 1px solid #a8a8a8; flex: none; }
.picked .no { background: #fccf8c; color: #801050; }
.picked .cell { background: #0a7a22; outline: 3px solid #777; outline-offset: -3px; color: #0a2a10; }
.picked .next { background: #0a7a22; color: #d8e8d8; }
.st-v { width: 19px; margin-left: 2px; }
.st-v .vthumb { height: 68px; background: #c4c4c4; }
.st-h { height: 20px; }
.st-h .hthumb { margin-left: 14px; width: 25px; height: 100%; background: #c4c4c4; }
.st-h .arrh { margin: 0 5px 0 8px; }

.layer-tree { height: 113px; margin-top: 3px; box-sizing: border-box; background: #fff; border: 1px solid #8a90a0; padding: 0 0 0 12px; font-size: 15px; width: 235px; }
.lr { height: 18px; display: flex; align-items: center; }
.chevr { width: 8px; height: 12px; opacity: .5; }
.dash { width: 6px; height: 1px; margin: 0 3px; background: #888; }
.cb { width: 15px; height: 15px; box-sizing: border-box; border: 1px solid #555; background: #fff; margin-right: 4px; flex: none; }
.cb.small { width: 13px; height: 14px; border-color: #888; margin: 0 10px 0 1px; }

/* drawing area */
.work { flex: 1; min-width: 0; display: flex; flex-direction: column; }
.canvas { position: relative; height: 758px; background: #000; border-top: 1px solid #a8a8a8; box-sizing: border-box; }
.drawing { display: block; width: 1500px; height: 757px; }
.drawing path, .drawing circle { vector-effect: non-scaling-stroke; }

.axis-red path { stroke: #960f0f; stroke-width: 2; fill: none; }
.axis-green path { stroke: #156a15; stroke-width: 2; fill: none; }
.wall-dark path { fill: #3b0070; }
.wall-bright path { fill: #6f00dd; }
.edge-bright { stroke: #1480ff; stroke-width: 3; fill: none; }
.edge-dark { stroke: #2a55e8; stroke-width: 3; fill: none; }
.bar-gray { stroke: #a89a94; stroke-width: 2; fill: none; }
.bar-purple { stroke: #8a50c4; stroke-width: 2; fill: none; }
.arrow-line { stroke: #111; stroke-width: 2; fill: none; }
.cad-circles circle { stroke: #909090; fill: none; }
.axis-tags circle { stroke: #137013; fill: none; }
.axis-nums text { fill: #bbb; font: bold 17px "Liberation Sans", sans-serif; text-anchor: middle; }
.ink { stroke: #ffff00; stroke-width: 4; fill: none; stroke-linejoin: round; stroke-linecap: round; }
.gz { font: 19px "Liberation Sans", sans-serif; font-weight: 300; }
.gz.z { fill: #1050c0; }
.gz.y { fill: #0c8a20; }
.gz.xx { fill: #c01010; }

.rebar-panel { position: absolute; left: 11px; top: 3px; width: 138px; height: 222px; background: #fff; box-sizing: border-box; display: flex; flex-direction: column; overflow: hidden; }
.rp-title { height: 39px; display: flex; align-items: center; justify-content: center; color: #999; padding-top: 2px; flex: none; box-sizing: border-box; }
.rp-list { flex: 1; border: 2px solid #aaa; padding: 0 0 0 4px; overflow: hidden; }
.rp-list label { height: 15px; display: flex; align-items: center; white-space: nowrap; font-size: 16px; color: #111; }
.chk { width: 13px; height: 13px; margin-right: 5px; flex: none; }

/* bottom toolbar */
.dim-l { color: #a8a8a8; font-size: 15px; margin: 0 4px 0 0; }
.dim-l.mm { margin: 0 8px 0 4px; }
.dim-l.mm.last { margin: 0 4px; }
.dim-l.deg { margin: 0 0 0 4px; }
.num { display: inline-flex; align-items: center; justify-content: flex-end; height: 28px; box-sizing: border-box; border: 1px solid #fafafa; color: #909090; font-size: 16px; flex: none; }
.spin { width: 14px; height: 16px; margin: 0 2px 0 4px; background:
    linear-gradient(135deg, transparent 50%, #aaa 50%) left top/7px 4px no-repeat,
    linear-gradient(225deg, transparent 50%, #aaa 50%) right top/7px 4px no-repeat,
    linear-gradient(45deg, transparent 50%, #aaa 50%) left bottom/7px 4px no-repeat,
    linear-gradient(315deg, transparent 50%, #aaa 50%) right bottom/7px 4px no-repeat; }
.rot { margin-right: 6px; }

/* status bar */
.status { height: 28px; display: flex; box-sizing: border-box; padding-top: 2px; gap: 4px; }
.st { border: 1px solid #ddd; border-top-color: #bbb; border-left-color: #bbb; display: flex; align-items: center; box-sizing: border-box; padding-left: 2px; white-space: nowrap; }
.w184 { width: 184px; }
.w96 { width: 96px; }
.w120 { width: 120px; }
.w59 { width: 59px; }
.rest { flex: 1; border: 0; border-left: 1px solid #bbb; }
.strip { height: 2px; background: #26383e; }

/* input method bar */
.ime { position: absolute; right: 1px; bottom: 2px; width: 248px; height: 32px; background: #fff; display: flex; align-items: center; gap: 10px; padding-left: 10px; box-sizing: border-box; }
.sogou { position: absolute; left: -33px; top: -5px; width: 40px; height: 35px; }
.ime-zh { color: #1478d4; font-weight: bold; font-size: 19px; margin-right: 4px; }
.im { width: 20px; height: 20px; flex: none; }
.cut { background: linear-gradient(#fff6e8, #e8e8ff); }
```
